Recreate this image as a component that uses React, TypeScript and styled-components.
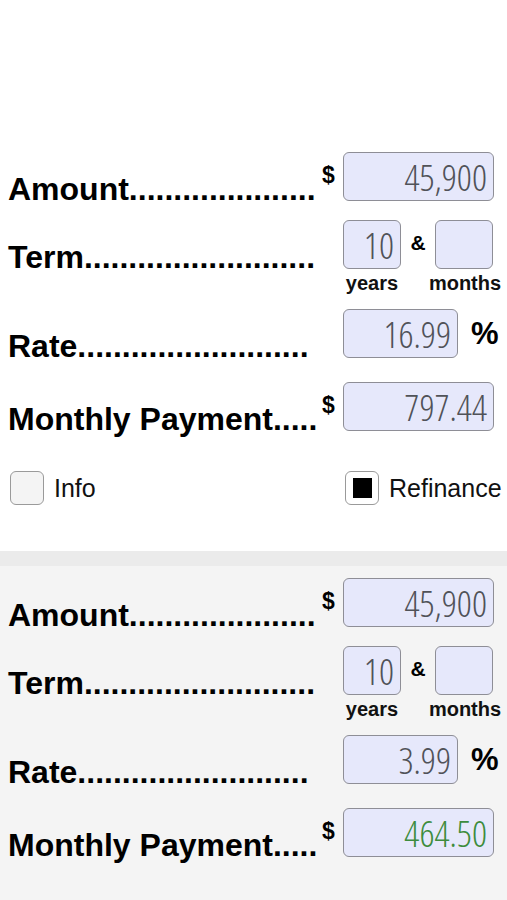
import React from 'react';
import styled, { createGlobalStyle } from 'styled-components';

const GlobalStyle = createGlobalStyle`
  html, body {
    margin: 0;
    padding: 0;
    background: #ffffff;
  }
  body {
    font-family: "Liberation Sans", Arial, sans-serif;
    color: #000;
  }
`

const Page = styled.div`
  width: 507px;
  height: 900px;
  overflow: hidden;
  display: flex;
  flex-direction: column;
`

const Section = styled.section<{ $alt?: boolean }>`
  background: ${p => (p.$alt ? '#f4f4f4' : '#ffffff')};
  border-top: ${p => (p.$alt ? '15px solid #ebebeb' : 'none')};
  padding: ${p => (p.$alt ? '12px 0 0' : '152px 0 46px')};
  flex: ${p => (p.$alt ? '1' : 'none')};
`

const Row = styled.div<{ $gap?: number }>`
  display: grid;
  grid-template-columns: 1fr 23px 151px;
  padding: 0 13px 0 8px;
  margin-top: ${p => p.$gap ?? 0}px;
`

const Label = styled.div`
  grid-column: 1;
  grid-row: 1;
  align-self: end;
  font-size: 32px;
  line-height: 24px;
  font-weight: bold;
  white-space: nowrap;
`

const Symbol = styled.div`
  grid-column: 2;
  grid-row: 1;
  align-self: start;
  margin-top: 12px;
  padding-left: 2px;
  font-size: 23px;
  line-height: 23px;
  font-weight: bold;
`

const Field = styled.div`
  grid-column: 3;
  grid-row: 1;
  display: flex;
  align-items: center;
`

const Box = styled.div<{ $w: number; $green?: boolean }>`
  box-sizing: border-box;
  width: ${p => p.$w}px;
  height: 49px;
  flex: none;
  background: #e6e8fb;
  border: 1.5px solid #8e8e96;
  border-radius: 6px;
  display: flex;
  align-items: center;
  justify-content: flex-end;
  padding: 0 6px 0 4px;
  font-family: "Open Sans", "Liberation Sans", Arial, sans-serif;
  font-stretch: 84%;
  font-weight: 360;
  font-size: 37px;
  color: ${p => (p.$green ? '#3d8c3d' : '#505258')};
  white-space: nowrap;
`

const Amp = styled.div`
  width: 34px;
  text-align: center;
  font-size: 21px;
  font-weight: bold;
  margin-top: -3px;
`

const Percent = styled.div`
  margin-left: 13px;
  font-size: 31px;
  font-weight: bold;
`

const Captions = styled.div`
  grid-column: 3;
  grid-row: 2;
  display: flex;
  justify-content: space-between;
  margin-top: 4px;
`

const Caption = styled.span`
  width: 58px;
  display: flex;
  justify-content: center;
  font-size: 20px;
  line-height: 20px;
  font-weight: bold;
  color: #111;
  white-space: nowrap;
`

const OptionRow = styled.div`
  display: grid;
  grid-template-columns: 1fr 162px;
  padding: 0 0 0 10px;
  margin-top: 40px;
`

const Option = styled.label`
  display: flex;
  align-items: center;
  gap: 10px;
  font-size: 25px;
  color: #111;
  white-space: nowrap;
`

const Check = styled.span<{ $checked?: boolean }>`
  box-sizing: border-box;
  width: 34px;
  height: 34px;
  flex: none;
  border: 1.5px solid #9a9a9a;
  border-radius: 6px;
  background: ${p => (p.$checked ? '#ffffff' : '#f4f4f4')};
  display: flex;
  align-items: center;
  justify-content: center;
  &::after {
    content: '';
    display: ${p => (p.$checked ? 'block' : 'none')};
    width: 19px;
    height: 20px;
    background: #000;
  }
`

type CalcProps = {
  amount: string;
  years: string;
  months: string;
  rate: string;
  payment: string;
  green?: boolean;
};

function Calculator({ amount, years, months, rate, payment, green }: CalcProps) {
  return (
    <>
      <Row>
        <Label>Amount.....................</Label>
        <Symbol>$</Symbol>
        <Field>
          <Box $w={151}>{amount}</Box>
        </Field>
      </Row>
      <Row $gap={19}>
        <Label>Term..........................</Label>
        <Field>
          <Box $w={58}>{years}</Box>
          <Amp>&amp;</Amp>
          <Box $w={58}>{months}</Box>
        </Field>
        <Captions>
          <Caption>years</Caption>
          <Caption>months</Caption>
        </Captions>
      </Row>
      <Row $gap={16}>
        <Label>Rate..........................</Label>
        <Field>
          <Box $w={115}>{rate}</Box>
          <Percent>%</Percent>
        </Field>
      </Row>
      <Row $gap={24}>
        <Label>Monthly Payment.....</Label>
        <Symbol>$</Symbol>
        <Field>
          <Box $w={151} $green={green}>{payment}</Box>
        </Field>
      </Row>
    </>
  );
}

export default function App() {
  return (
    <Page>
      <GlobalStyle />
      <Section>
        <Calculator amount="45,900" years="10" months="" rate="16.99" payment="797.44" />
        <OptionRow>
          <Option>
            <Check />
            Info
          </Option>
          <Option>
            <Check $checked />
            Refinance
          </Option>
        </OptionRow>
      </Section>
      <Section $alt>
        <Calculator amount="45,900" years="10" months="" rate="3.99" payment="464.50" green />
      </Section>
    </Page>
  );
}
